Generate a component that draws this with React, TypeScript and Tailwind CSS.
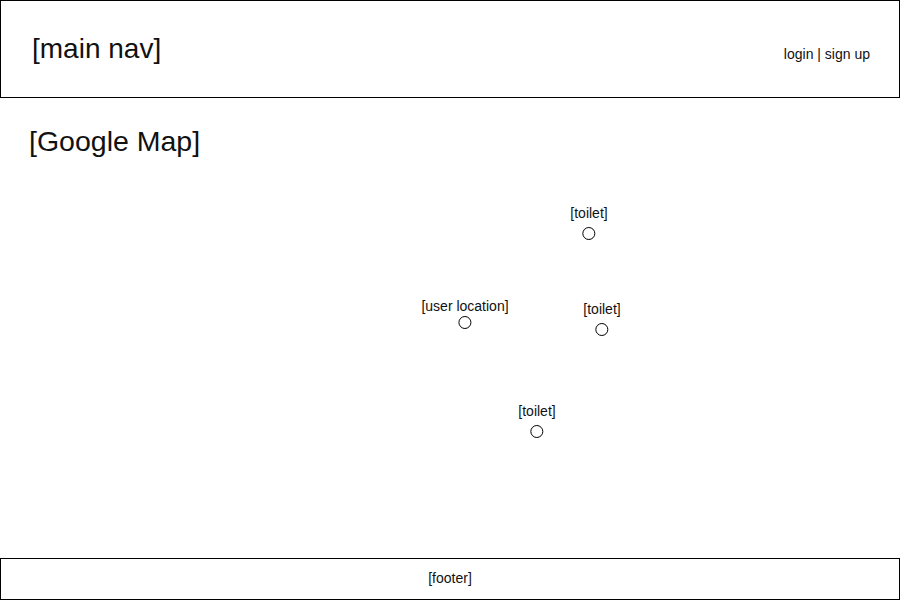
const pins = [
  { label: '[user location]', x: 464, y: 322, gap: 2 },
  { label: '[toilet]', x: 588, y: 233, gap: 6 },
  { label: '[toilet]', x: 601, y: 329, gap: 6 },
  { label: '[toilet]', x: 536, y: 431, gap: 6 },
];

function Pin({ label, x, y, gap }: { label: string; x: number; y: number; gap: number }) {
  // x/y is the centre of the marker circle, in page coordinates
  return (
    <div
      className="absolute flex flex-col items-center -translate-x-1/2"
      style={{ left: x + 1, top: y - 98 - 22 - gap, gap }}
    >
      <span className="text-[14px] leading-[16px] whitespace-nowrap">{label}</span>
      <span className="w-[13px] h-[13px] rounded-full border border-black" />
    </div>
  );
}

export default function App() {
  return (
    <div
      className="w-[900px] h-[600px] flex flex-col bg-white text-[#111]"
      style={{ fontFamily: '"Liberation Sans", Arial, sans-serif' }}
    >
      {/* Main nav */}
      <header className="h-[98px] shrink-0 border border-black flex items-center justify-between pl-[31px] pr-[29px]">
        <span className="text-[28px] leading-[32px]">[main nav]</span>
        <span className="text-[14px] leading-[16px] mt-[10px]">login | sign up</span>
      </header>

      {/* Map */}
      <main className="relative flex-1 pt-[27px] pl-[29px]">
        <h1 className="text-[28.5px] leading-[32px]">[Google Map]</h1>
        {pins.map((p, i) => (
          <Pin key={i} {...p} />
        ))}
      </main>

      <footer className="h-[42px] shrink-0 border border-black flex items-center justify-center">
        <span className="text-[14px] leading-[16px] mb-[2px]">[footer]</span>
      </footer>
    </div>
  );
}
